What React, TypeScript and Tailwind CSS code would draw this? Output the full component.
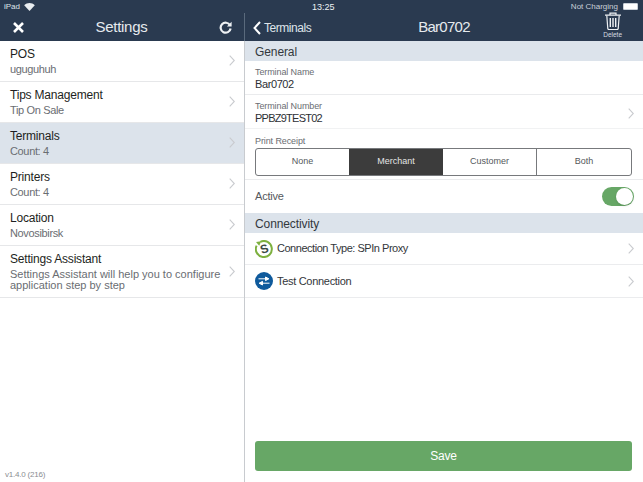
const font = "font-['Liberation_Sans',Arial,sans-serif]";

const menu = [
  { title: "POS", sub: ["uguguhuh"] },
  { title: "Tips Management", sub: ["Tip On Sale"] },
  { title: "Terminals", sub: ["Count: 4"], active: true },
  { title: "Printers", sub: ["Count: 4"] },
  { title: "Location", sub: ["Novosibirsk"] },
  {
    title: "Settings Assistant",
    sub: ["Settings Assistant will help you to configure", "application step by step"],
  },
];

function Chevron({ className = "" }: { className?: string }) {
  return (
    <svg width="6" height="11" viewBox="0 0 6 11" className={className}>
      <path d="M.7.7l4.6 4.8-4.6 4.8" fill="none" stroke="#c9cbcf" strokeWidth="1.1" />
    </svg>
  );
}

function WifiIcon() {
  return (
    <svg width="11" height="8" viewBox="0 0 12 9" fill="#e8ecf0">
      <path d="M6 9L0 2.6C3.4-.8 8.6-.8 12 2.6z" />
    </svg>
  );
}

function TrashIcon() {
  return (
    <svg width="18" height="18" viewBox="0 0 18 18" fill="none" stroke="#eef1f4" strokeWidth="1.2">
      <path d="M1 3.2h16M6 3V1.2h6V3" />
      <path d="M2.8 3.5l1 13.2a1 1 0 0 0 1 .8h8.4a1 1 0 0 0 1-.8l1-13.2" />
      <path d="M6.3 6v9M9 6v9M11.7 6v9" strokeWidth="1.4" />
    </svg>
  );
}

function SpinIcon() {
  return (
    <svg width="18" height="18" viewBox="0 0 18 18">
      <path d="M5.4 1.8A8 8 0 1 1 1.6 5.6" fill="none" stroke="#7db03f" strokeWidth="2" />
      <path d="M1 2l5.2-.8-2 4.6z" fill="#7db03f" />
      <text
        x="9"
        y="13"
        textAnchor="middle"
        fontSize="12"
        fontWeight="700"
        fontFamily="Liberation Sans"
        fill="#3c4a45"
        transform="rotate(-18 9 9)"
      >
        S
      </text>
    </svg>
  );
}

function TestIcon() {
  return (
    <svg width="18" height="18" viewBox="0 0 18 18">
      <circle cx="9" cy="9" r="9" fill="#0f5a9c" />
      <path d="M3.5 6.8h8M10.5 5l3.4 1.8-3.4 1.8z" fill="#fff" stroke="#fff" strokeWidth="1" />
      <path d="M14.5 11.2h-8M7.5 9.4l-3.4 1.8 3.4 1.8z" fill="#fff" stroke="#fff" strokeWidth="1" />
    </svg>
  );
}

function SectionHeader({ label }: { label: string }) {
  return (
    <div className="flex h-[20px] items-center bg-[#dce3eb] pl-[10px] pt-[1px] text-[12px] tracking-[-0.1px] text-[#33383d]">
      {label}
    </div>
  );
}

export default function App() {
  return (
    <div className={`flex h-[482px] w-[643px] flex-col overflow-hidden bg-white ${font}`}>
      {/* status + nav */}
      <div className="h-[41px] shrink-0 bg-[#2a3a50] text-[#eef1f4]">
        <div className="relative flex h-[13px] items-center justify-between pl-[4px] pr-[5px] text-[8px]">
          <div className="flex items-center gap-[4px] text-[#dfe4ea]">
            iPad <WifiIcon />
          </div>
          <div className="absolute left-[312px] top-[1px] text-[9px]">13:25</div>
          <div className="flex items-center gap-[5px] text-[#c9d0d8]">
            Not Charging
            <div className="h-[7px] w-[15px] rounded-[1px] border border-[#c9d0d8] bg-white" />
          </div>
        </div>
        <div className="flex h-[28px]">
          <div className="flex w-[244px] items-center justify-between pl-[13px] pr-[12px]">
            <svg width="11" height="11" viewBox="0 0 11 11">
              <path d="M1 1l9 9M10 1l-9 9" stroke="#fff" strokeWidth="2.6" />
            </svg>
            <div className="text-[15px] tracking-[-0.3px] text-[#e6eaee]">Settings</div>
            <svg width="13" height="13" viewBox="0 0 13 13" fill="none">
              <path d="M11 4.2A5 5 0 1 0 11.6 7.5" stroke="#eef1f4" strokeWidth="2.2" />
              <path d="M12.6.8v4.8H7.9z" fill="#eef1f4" />
            </svg>
          </div>
          <div className="w-px bg-[#5a6a7c]" />
          <div className="relative flex flex-1 items-center justify-center">
            <div className="absolute left-[8px] top-[6px] flex items-center gap-[3px] text-[12px] tracking-[-0.45px] text-[#dfe4ea]">
              <svg width="8" height="14" viewBox="0 0 8 14">
                <path d="M7 1L1.5 7 7 13" fill="none" stroke="#fff" strokeWidth="2" />
              </svg>
              Terminals
            </div>
            <div className="text-[15px] tracking-[-0.75px] text-[#e6eaee]">Bar0702</div>
            <div className="absolute right-[21px] top-[-1px] flex flex-col items-center">
              <TrashIcon />
              <div className="text-[6.5px] leading-[9px] text-[#d5dae0]">Delete</div>
            </div>
          </div>
        </div>
      </div>

      <div className="flex flex-1">
        {/* left list */}
        <div className="relative w-[245px] shrink-0 border-r border-[#c8cbcf]">
          {menu.map((m) => (
            <div
              key={m.title}
              className={`flex items-center justify-between border-b border-[#e6e7e9] pb-[1px] pl-[10px] pr-[9px] ${
                m.active ? "bg-[#dce3eb]" : "bg-white"
              } ${m.sub.length > 1 ? "h-[52px]" : "h-[41px]"}`}
            >
              <div>
                <div className="text-[12px] leading-[15px] tracking-[-0.2px] text-[#1d1f22]">{m.title}</div>
                <div
                  className={`text-[#6a6d72] ${
                    m.sub.length > 1
                      ? "mt-[2px] text-[11px] leading-[11px]"
                      : "mt-[1px] text-[11px] leading-[12px] tracking-[-0.35px]"
                  }`}
                >
                  {m.sub.map((s) => (
                    <div key={s}>{s}</div>
                  ))}
                </div>
              </div>
              <Chevron />
            </div>
          ))}
          <div className="absolute bottom-[1px] left-[5px] text-[8px] tracking-[-0.2px] text-[#8a8d91]">
            v1.4.0 (216)
          </div>
        </div>

        {/* right detail */}
        <div className="flex min-w-0 flex-1 flex-col">
          <SectionHeader label="General" />
          <div className="h-[34px] border-b border-[#eaebed] pl-[10px] pt-[6px]">
            <div className="text-[9px] leading-[11px] tracking-[-0.1px] text-[#6a6d72]">Terminal Name</div>
            <div className="text-[11px] leading-[13px] tracking-[-0.4px] text-[#2d3034]">Bar0702</div>
          </div>
          <div className="flex h-[34px] items-center justify-between border-b border-[#f1f2f3] pl-[10px] pr-[9px] pt-[3px]">
            <div>
              <div className="text-[9px] leading-[11px] tracking-[-0.1px] text-[#6a6d72]">Terminal Number</div>
              <div className="text-[11px] leading-[13px] tracking-[-0.75px] text-[#2d3034]">PPBZ9TEST02</div>
            </div>
            <Chevron />
          </div>
          <div className="h-[51px] border-b border-[#eaebed] pl-[10px] pr-[11px] pt-[7px]">
            <div className="mb-[1px] text-[9px] leading-[11px] tracking-[-0.1px] text-[#6a6d72]">Print Receipt</div>
            <div className="grid h-[28px] grid-cols-[93px_94px_94px_1fr] overflow-hidden rounded-[3px] border border-[#77797c] text-[9px] text-[#55585c]">
              <div className="flex items-center justify-center">None</div>
              <div className="flex items-center justify-center bg-[#3c3c3c] text-[#e4e4e4]">Merchant</div>
              <div className="flex items-center justify-center border-r border-[#77797c]">Customer</div>
              <div className="flex items-center justify-center">Both</div>
            </div>
          </div>
          <div className="flex h-[33px] items-center justify-between pl-[10px] pr-[9px]">
            <div className="text-[11px] tracking-[-0.2px] text-[#55585c]">Active</div>
            <div className="flex h-[19px] w-[32px] justify-end rounded-full bg-[#67a766] p-[1px]">
              <div className="h-[17px] w-[17px] rounded-full bg-white shadow" />
            </div>
          </div>
          <SectionHeader label="Connectivity" />
          <div className="flex h-[32px] items-center justify-between border-b border-[#ebecee] pl-[10px] pr-[9px]">
            <div className="flex items-center gap-[4px] text-[11px] tracking-[-0.47px] text-[#33363a]">
              <SpinIcon />
              Connection Type: SPIn Proxy
            </div>
            <Chevron />
          </div>
          <div className="flex h-[33px] items-center justify-between border-b border-[#ebecee] pl-[10px] pr-[9px]">
            <div className="flex items-center gap-[4px] text-[11px] tracking-[-0.3px] text-[#33363a]">
              <TestIcon />
              Test Connection
            </div>
            <Chevron />
          </div>
          <div className="mt-auto pb-[11px] pl-[10px] pr-[11px]">
            <div className="flex h-[30px] items-center justify-center rounded-[3px] bg-[#67a766] text-[12px] tracking-[-0.2px] text-white">
              Save
            </div>
          </div>
        </div>
      </div>
    </div>
  );
}
